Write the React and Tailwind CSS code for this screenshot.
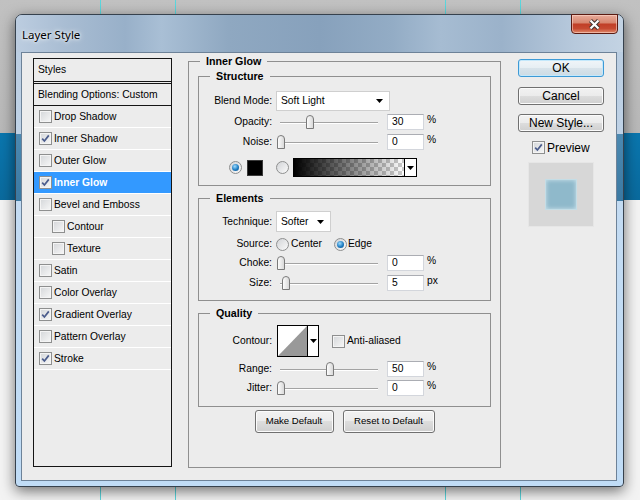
import React from "react";

const FONT = "font-['Liberation_Sans',Arial,sans-serif]";

const styleItems = [
  { name: "Drop Shadow" },
  { name: "Inner Shadow", on: true },
  { name: "Outer Glow" },
  { name: "Inner Glow", on: true, sel: true },
  { name: "Bevel and Emboss" },
  { name: "Contour", ind: true },
  { name: "Texture", ind: true },
  { name: "Satin" },
  { name: "Color Overlay" },
  { name: "Gradient Overlay", on: true },
  { name: "Pattern Overlay" },
  { name: "Stroke", on: true },
];

function CheckBox({ on }) {
  return (
    <span className="flex h-[13px] w-[13px] shrink-0 items-center justify-center border border-[#8e8f8f] bg-[linear-gradient(135deg,#d4d6d9,#f7f7f7)] shadow-[inset_0_0_0_1px_#f4f4f4]">
      {on && (
        <svg width="9" height="9" viewBox="0 0 9 9">
          <path d="M1.2 4.6 L3.4 7 L7.8 1.4" fill="none" stroke="#4b5c8c" strokeWidth="1.7" />
        </svg>
      )}
    </span>
  );
}

function Radio({ on }) {
  return (
    <span className="flex h-[13px] w-[13px] shrink-0 items-center justify-center rounded-full border border-[#8e8f8f] bg-[linear-gradient(135deg,#d2d4d7,#fafafa)]">
      {on && <span className="h-[7px] w-[7px] rounded-full bg-[radial-gradient(circle_at_40%_35%,#9fdcff,#1f7dc2_55%,#0b4d86)]" />}
    </span>
  );
}

function Arrow() {
  return (
    <svg width="7" height="4" viewBox="0 0 7 4">
      <path d="M0 0h7L3.5 4z" fill="#000" />
    </svg>
  );
}

function Group({ title, className, children }) {
  return (
    <div className={`relative shrink-0 border border-[#8f8f8f] ${className}`}>
      <span className="absolute -top-[8px] left-[11px] bg-[#ececec] px-[6px] text-[10.7px] font-bold leading-[14px]">
        {title}
      </span>
      {children}
    </div>
  );
}

function Thumb({ left }) {
  return (
    <svg className="absolute top-[1px]" style={{ left }} width="8" height="14" viewBox="0 0 8 14">
      <defs>
        <linearGradient id="tg" x1="0" y1="0" x2="1" y2="0">
          <stop offset="0" stopColor="#ffffff" />
          <stop offset="1" stopColor="#d6d6d6" />
        </linearGradient>
      </defs>
      <path d="M0.5 4 Q0.5 0.5 4 0.5 Q7.5 0.5 7.5 4 V13.5 H0.5 Z" fill="url(#tg)" stroke="#7a7a7a" />
    </svg>
  );
}

function NumBox({ value }) {
  return (
    <div className="ml-[3px] h-[16px] w-[37px] shrink-0 border border-[#d3d6dc] border-t-[#abadb3] bg-white pl-[4px] leading-[14px]">
      {value}
    </div>
  );
}

function SliderRow({ label, value, unit, pos, className }) {
  return (
    <div className={`flex h-[16px] items-center ${className}`}>
      <span className="w-[73px] shrink-0 text-right">{label}</span>
      <div className="relative ml-[4px] h-[16px] w-[108px] shrink-0">
        <div className="absolute left-[4px] top-[8px] h-[2px] w-[98px] border-t border-[#a3a3a3] bg-white" />
        <Thumb left={pos} />
      </div>
      <NumBox value={value} />
      <span className="ml-[3px] -mt-[4px]">{unit}</span>
    </div>
  );
}

function Select({ text, className }) {
  return (
    <div className={`flex shrink-0 items-center justify-between border border-[#cfcfcf] bg-white pl-[4px] pr-[6px] ${className}`}>
      <span>{text}</span>
      <Arrow />
    </div>
  );
}

function Btn({ children, className, focus }) {
  return (
    <div
      className={`flex items-center justify-center rounded-[3px] border ${
        focus
          ? "border-[#3d9ad6] bg-[linear-gradient(to_bottom,#f0f5f8_0%,#e6eef3_50%,#d8e3ea_50%,#ccdbe4_100%)] shadow-[inset_0_0_0_1px_#c4e8fb]"
          : "border-[#707070] bg-[linear-gradient(to_bottom,#f2f2f2_0%,#ebebeb_50%,#dddddd_50%,#cfcfcf_100%)] shadow-[inset_0_0_0_1px_#fbfbfb]"
      } ${className}`}
    >
      {children}
    </div>
  );
}

export default function App() {
  return (
    <div
      className={`relative h-[500px] w-[640px] overflow-hidden bg-[linear-gradient(to_bottom,#c1c1c1_0px,#b8b8b8_133px,#0a76ae_133px,#0a6a9d_200px,#f3f3f3_200px)] pl-[15px] pt-[14px] text-[10.3px] text-black ${FONT}`}
    >
      <div className="absolute left-[100px] top-0 h-full w-px bg-[#5ad6dd]" />
      <div className="absolute left-[175px] top-0 h-full w-px bg-[#5ad6dd]" />
      <div className="absolute left-[445px] top-0 h-full w-px bg-[#5ad6dd]" />
      <div className="absolute left-[520px] top-0 h-full w-px bg-[#5ad6dd]" />

      <div className="relative z-10 flex h-[473px] w-[609px] flex-col rounded-t-[7px] rounded-b-[4px] border border-[#36414d] bg-[linear-gradient(to_bottom,#b9cce0_0px,#bfd2e6_119px,#4c89b1_119px,#3b79a2_186px,#c3dbf2_186px,#c0dcf6_100%)] shadow-[0_4px_14px_rgba(0,0,0,0.55)]">
        <div className="flex h-[37px] shrink-0 items-start justify-between rounded-t-[6px] bg-[linear-gradient(90deg,#bccde0_0%,#a9bdd3_8%,#98b0c9_18%,#a9bfd5_24%,#8fa8c1_35%,#87a1bc_50%,#93acc5_62%,#a6bcd2_70%,#9bb2ca_80%,#b7c9dc_92%,#c3d3e3_100%)] pl-[6px] pr-[5px]">
          <span className="mt-[12px] font-['Noto_Sans',sans-serif] text-[11.5px] leading-[16px] [text-shadow:0_0_6px_#fff,0_0_3px_#fff]">
            Layer Style
          </span>
          <div className="-mt-px flex h-[20px] w-[47px] items-center justify-center rounded-b-[4px] border border-[#5a1b12] bg-[linear-gradient(to_bottom,#e8ab9a_0%,#d88770_42%,#c13f27_52%,#c64a31_75%,#e08a6c_100%)] shadow-[inset_0_0_0_1px_rgba(255,220,210,0.55)]">
            <svg width="13" height="11" viewBox="0 0 13 11">
              <path d="M2.5 1.5 L10.5 9.5 M10.5 1.5 L2.5 9.5" stroke="#40322f" strokeWidth="4.2" />
              <path d="M2.5 1.5 L10.5 9.5 M10.5 1.5 L2.5 9.5" stroke="#ffffff" strokeWidth="2.2" />
            </svg>
          </div>
        </div>

        <div className="flex-1 pb-[5px] pl-[5px] pr-[6px]">
          <div className="flex h-full items-start border border-[#6d8298] bg-[#ececec] pl-[11px]">
            {/* styles list */}
            <div className="mt-[5px] h-[409px] w-[139px] shrink-0 border border-[#151515]">
              <div className="flex h-[23px] items-center border-b border-[#151515] pl-[4px]">Styles</div>
              <div className="h-px" />
              <div className="flex h-[23px] items-center border-y border-[#151515] pl-[4px]">Blending Options: Custom</div>
              {styleItems.map((s) => (
                <div
                  key={s.name}
                  className={`flex h-[22px] items-center gap-[2px] border-b border-white ${s.ind ? "pl-[18px]" : "pl-[5px]"} ${
                    s.sel ? "bg-[#3399ff] font-bold text-white" : ""
                  }`}
                >
                  <CheckBox on={s.on} />
                  <span>{s.name}</span>
                </div>
              ))}
            </div>

            {/* settings */}
            <Group title="Inner Glow" className="ml-[16px] mt-[8px] h-[407px] w-[313px]">
              <Group title="Structure" className="ml-[9px] mt-[14px] h-[110px] w-[293px]">
                <div className="mt-[14px] flex h-[20px] items-center">
                  <span className="w-[73px] shrink-0 text-right">Blend Mode:</span>
                  <Select text="Soft Light" className="ml-[4px] h-[20px] w-[114px]" />
                </div>
                <SliderRow className="mt-[3px]" label="Opacity:" value="30" unit="%" pos={30} />
                <SliderRow className="mt-[4px]" label="Noise:" value="0" unit="%" pos={1} />
                <div className="mt-[8px] flex h-[19px] items-center pl-[30px]">
                  <Radio on />
                  <span className="ml-[5px] h-[16px] w-[16px] border border-[#3a3a3a] bg-black" />
                  <span className="ml-[13px]">
                    <Radio />
                  </span>
                  <div className="ml-[4px] flex h-[19px] w-[124px] border border-black">
                    <div className="flex-1 [background:linear-gradient(to_right,#000,rgba(0,0,0,0)),repeating-conic-gradient(#cbcbcb_0%_25%,#ffffff_0%_50%)_0_0/8px_8px]" />
                    <div className="flex w-[12px] items-center justify-center border-l border-black bg-white">
                      <Arrow />
                    </div>
                  </div>
                </div>
              </Group>

              <Group title="Elements" className="ml-[9px] mt-[12px] h-[103px] w-[293px]">
                <div className="mt-[12px] flex h-[21px] items-center">
                  <span className="w-[73px] shrink-0 text-right">Technique:</span>
                  <Select text="Softer" className="ml-[4px] h-[21px] w-[55px]" />
                </div>
                <div className="mt-[5px] flex h-[14px] items-center">
                  <span className="w-[73px] shrink-0 text-right">Source:</span>
                  <span className="ml-[4px]">
                    <Radio />
                  </span>
                  <span className="ml-[2px]">Center</span>
                  <span className="ml-[12px]">
                    <Radio on />
                  </span>
                  <span className="ml-[1px]">Edge</span>
                </div>
                <SliderRow className="mt-[4px]" label="Choke:" value="0" unit="%" pos={1} />
                <SliderRow className="mt-[4px]" label="Size:" value="5" unit="px" pos={6} />
              </Group>

              <Group title="Quality" className="ml-[9px] mt-[12px] h-[94px] w-[293px]">
                <div className="mt-[11px] flex h-[32px] items-center">
                  <span className="w-[73px] shrink-0 text-right">Contour:</span>
                  <div className="ml-[5px] flex h-[32px] w-[42px] shrink-0 border border-black bg-white">
                    <svg width="29" height="30" viewBox="0 0 29 30">
                      <polygon points="0,30 29,0 29,30" fill="#999999" />
                    </svg>
                    <div className="flex flex-1 items-center justify-center border-l border-black">
                      <Arrow />
                    </div>
                  </div>
                  <span className="ml-[13px]">
                    <CheckBox />
                  </span>
                  <span className="ml-[2px]">Anti-aliased</span>
                </div>
                <SliderRow className="mt-[4px]" label="Range:" value="50" unit="%" pos={50} />
                <SliderRow className="mt-[3px]" label="Jitter:" value="0" unit="%" pos={1} />
              </Group>

              <div className="mt-[3px] flex justify-center gap-[9px] text-[9.6px]">
                <Btn className="h-[23px] w-[79px]">Make Default</Btn>
                <Btn className="h-[23px] w-[92px]">Reset to Default</Btn>
              </div>
            </Group>

            {/* buttons */}
            <div className="ml-[17px] mt-[6px] flex w-[86px] shrink-0 flex-col text-[12px]">
              <Btn focus className="h-[18px]">OK</Btn>
              <Btn className="mt-[10px] h-[18px]">Cancel</Btn>
              <Btn className="mt-[9px] h-[18px]">New Style...</Btn>
              <div className="ml-[14px] mt-[9px] flex h-[13px] items-center gap-[2px]">
                <CheckBox on />
                <span>Preview</span>
              </div>
              <div className="ml-[10px] mt-[8px] flex h-[65px] w-[66px] items-center justify-center border border-[#e6e6e6] bg-[#d7d7d7]">
                <div className="h-[31px] w-[32px] border border-[#c4dde6] bg-[#8fb9cb] shadow-[inset_0_0_4px_#cfe4ec]" />
              </div>
            </div>
          </div>
        </div>
      </div>
    </div>
  );
}
